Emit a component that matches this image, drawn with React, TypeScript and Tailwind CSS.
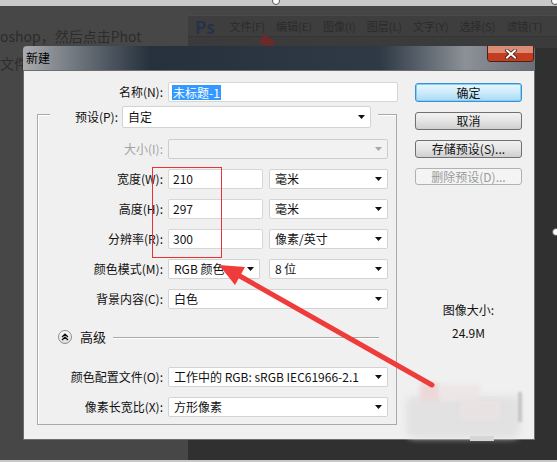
import React from "react";

function Arrow({ gray = false }: { gray?: boolean }) {
  return (
    <svg width="7" height="4" viewBox="0 0 7 4" className="shrink-0">
      <polygon points="0,0 7,0 3.5,4" fill={gray ? "#a8a8a8" : "#111"} />
    </svg>
  );
}

function Select({ w, text, disabled = false }: { w: string; text?: string; disabled?: boolean }) {
  return (
    <div
      className={`${w} h-full flex items-center justify-between rounded-[2px] border pl-[5px] pr-[5px] ${
        disabled ? "bg-[#f2f2f2] border-[#cdcdcd]" : "bg-white border-[#d3d3d3]"
      }`}
    >
      <span className="whitespace-nowrap text-[#111]">{text}</span>
      <Arrow gray={disabled} />
    </div>
  );
}

function Input({ w, text }: { w: string; text: string }) {
  return (
    <div className={`${w} h-full flex items-center rounded-[2px] border border-[#d6d6d6] bg-white pl-[4px] text-[#111]`}>
      {text}
    </div>
  );
}

function Row({ label, children, mt, disabled = false }: { label: string; children: React.ReactNode; mt: string; disabled?: boolean }) {
  return (
    <div className={`flex h-[20px] items-center ${mt}`}>
      <div className={`w-[125px] text-right whitespace-nowrap ${disabled ? "text-[#a3a3a3]" : "text-[#111]"}`}>{label}</div>
      <div className="ml-[5px] flex h-full gap-[6px]">{children}</div>
    </div>
  );
}

const btn =
  "w-[107px] flex items-center justify-center rounded-[3px] border text-[12px] whitespace-nowrap";
const btnNormal =
  "border-[#707070] text-[#111] bg-linear-to-b from-[#f2f2f2] via-[#e4e4e4] to-[#cfcfcf]";

export default function App() {
  return (
    <div className="relative w-[557px] h-[462px] overflow-hidden bg-[#474747] font-['Noto_Sans_CJK_SC','Noto_Sans',sans-serif] text-[12px]">
      <div className="h-[6px] bg-[#c9c9c9]" />
      <div className="flex h-[454px]">
        <div className="w-[188px] shrink-0 pt-[21px] text-[14px] leading-[18px] text-[#2c2c2c]">
          <div className="whitespace-nowrap">oshop，然后点击Phot</div>
          <div className="mt-[9px] whitespace-nowrap">文件</div>
        </div>
        <div className="flex min-w-0 flex-1 flex-col overflow-hidden">
          <div className="h-[9px] bg-[#464646]" />
          <div className="flex h-[21px] items-center border-t border-[#4a4a4a] bg-[#3e3e3e] pl-[7px]">
            <span className="shrink-0 text-[17px] font-bold leading-none text-[#26324a]">Ps</span>
            <div className="ml-[15px] flex shrink-0 gap-[11px] whitespace-nowrap text-[11px] text-[#2b2b2b]">
              <span>文件(F)</span>
              <span>编辑(E)</span>
              <span>图像(I)</span>
              <span>图层(L)</span>
              <span>文字(Y)</span>
              <span>选择(S)</span>
              <span>滤镜(T)</span>
            </div>
          </div>
          <div className="relative h-[12px] border-t border-[#353535] bg-[#3b3b3b]">
            <div className="absolute left-[72px] top-[0px] h-[10px] w-[14px] rotate-[35deg] bg-[#6a2a2a]" />
          </div>
          <div className="flex-1 bg-[#303030]" />
        </div>
      </div>
      <div className="h-[2px] bg-[#c8c8c8]" />

      {/* dialog */}
      <div className="absolute left-[23px] top-[46px] flex h-[394px] w-[512px] flex-col">
        <div className="relative flex h-[24px] items-center overflow-hidden rounded-t-[4px] bg-[#2a3541] bg-linear-to-r from-[#a9acaf] from-0% via-[#26313d] via-25% to-[#2f3a46] to-70% pl-[3px]">
          <div className="absolute right-0 top-0 h-full w-[155px] bg-linear-to-r from-[#2f3a46] via-[#8c9197] via-55% to-[#6a6f75]" />
          <span className="relative text-[12px] text-black">新建</span>
          <div className="absolute right-[1px] top-0 flex h-[16px] w-[47px] flex-col overflow-hidden rounded-b-[4px] border border-t-0 border-[#4a2018] bg-[#c43d21]">
            <div className="h-[7px] bg-[#dc8b74]" />
            <div className="flex-1 bg-[#c43d21]" />
            <svg className="absolute left-[17px] top-[3px]" width="12" height="10" viewBox="0 0 12 10">
              <path d="M2 1.5 L10 8.5 M10 1.5 L2 8.5" stroke="#3a1a12" strokeWidth="3.6" strokeLinecap="square" />
              <path d="M2 1.5 L10 8.5 M10 1.5 L2 8.5" stroke="#ffffff" strokeWidth="2" strokeLinecap="square" />
            </svg>
          </div>
        </div>
        <div className="flex flex-1 border border-[#6d6d6d] bg-[#f0f0f0]">
          {/* left column */}
          <div className="flex w-[376px] flex-col">
            <div className="mt-[11px] flex h-[20px] items-center">
              <div className="w-[139px] text-right text-[#111]">名称(N):</div>
              <div className="ml-[5px] flex h-full w-[230px] items-center rounded-[2px] border border-[#d6d6d6] bg-white pl-[3px]">
                <span className="bg-[#3399ff] px-[1px] leading-[15px] text-white">未标题-1</span>
              </div>
            </div>
            <div className="ml-[13px] mt-[12px] flex h-[311px] w-[360px] flex-col border border-[#a9a9a9] shadow-[inset_1px_1px_0_#ffffff]">
              <div className="-mt-[9px] ml-[12px] flex h-[22px] w-[328px] items-center bg-[#f0f0f0]">
                <div className="w-[68px] text-right text-[#111]">预设(P):</div>
                <div className="ml-[4px] h-full">
                  <Select w="w-[249px]" text="自定" />
                </div>
              </div>
              <Row label="大小(I):" mt="mt-[11px]" disabled>
                <Select w="w-[220px]" disabled />
              </Row>
              <Row label="宽度(W):" mt="mt-[10px]">
                <Input w="w-[95px]" text="210" />
                <Select w="w-[119px]" text="毫米" />
              </Row>
              <Row label="高度(H):" mt="mt-[10px]">
                <Input w="w-[95px]" text="297" />
                <Select w="w-[119px]" text="毫米" />
              </Row>
              <Row label="分辨率(R):" mt="mt-[10px]">
                <Input w="w-[95px]" text="300" />
                <Select w="w-[119px]" text="像素/英寸" />
              </Row>
              <Row label="颜色模式(M):" mt="mt-[10px]">
                <div className="h-full">
                  <Select w="w-[92px]" text="RGB 颜色" />
                </div>
                <div className="ml-[3px] h-full">
                  <Select w="w-[119px]" text="8 位" />
                </div>
              </Row>
              <Row label="背景内容(C):" mt="mt-[10px]">
                <Select w="w-[220px]" text="白色" />
              </Row>
              <div className="mt-[20px] flex h-[16px] items-center pl-[20px] pr-[17px]">
                <div className="flex h-[14px] w-[14px] items-center justify-center rounded-full border border-[#8c8c8c] bg-linear-to-b from-white to-[#dcdcdc]">
                  <svg width="8" height="8" viewBox="0 0 8 8">
                    <path d="M1 4 L4 1.2 L7 4 M1 7 L4 4.2 L7 7" fill="none" stroke="#111" strokeWidth="1.3" />
                  </svg>
                </div>
                <span className="ml-[8px] text-[13px] text-[#111]">高级</span>
                <div className="ml-[7px] h-[1px] flex-1 bg-[#a9a9a9] shadow-[0_1px_0_#ffffff]" />
              </div>
              <Row label="颜色配置文件(O):" mt="mt-[22px]">
                <Select w="w-[220px]" text="工作中的 RGB: sRGB IEC61966-2.1" />
              </Row>
              <Row label="像素长宽比(X):" mt="mt-[10px]">
                <Select w="w-[220px]" text="方形像素" />
              </Row>
            </div>
          </div>
          {/* right column */}
          <div className="ml-[15px] flex w-[107px] flex-col">
            <div
              className={`${btn} mt-[12px] h-[19px] border-[#3c8fd0] text-[#111] shadow-[inset_0_0_0_1px_#7fd0f5] bg-linear-to-b from-[#eaf6fd] via-[#cdebfc] to-[#a7d9f5]`}
            >
              确定
            </div>
            <div className={`${btn} ${btnNormal} mt-[10px] h-[18px]`}>取消</div>
            <div className={`${btn} ${btnNormal} mt-[10px] h-[18px]`}>存储预设(S)...</div>
            <div className={`${btn} mt-[10px] h-[17px] border-[#adb2b5] bg-[#f4f4f4] text-[#9a9a9a]`}>删除预设(D)...</div>
            <div className="mt-[117px] text-center leading-[16px] text-[#111]">图像大小:</div>
            <div className="mt-[7px] text-center leading-[16px] text-[#111]">24.9M</div>
          </div>
        </div>
      </div>

      {/* blurred watermark */}
      <div className="absolute left-[406px] top-[396px] h-[42px] w-[114px] rounded-[8px] bg-[#e2e2e2] blur-[3px]" />
      <div className="absolute left-[420px] top-[383px] h-[18px] w-[20px] rounded-[3px] bg-[#ecd8d8] blur-[2px]" />
      <div className="absolute left-[440px] top-[385px] h-[16px] w-[40px] bg-[#ede6e6] blur-[2px]" />
      <div className="absolute left-[460px] top-[400px] h-[20px] w-[40px] bg-[#e9e2e2] blur-[2px]" />
      <div className="absolute left-[518px] top-[392px] h-[30px] w-[4px] bg-[#c6c6c6] blur-[1px]" />
      <div className="absolute left-[470px] top-[436px] h-[5px] w-[24px] bg-[#d6d6d6]" />

      {/* red annotations */}
      <div className="absolute left-[152px] top-[167px] h-[91px] w-[70px] border border-[#ee3030]" />
      <svg className="pointer-events-none absolute left-0 top-0" width="557" height="462" viewBox="0 0 557 462">
        <line x1="238" y1="275" x2="432" y2="385" stroke="#f03b3b" strokeWidth="5" strokeLinecap="round" />
        <polygon points="219,265 245,267 235,285" fill="#f03b3b" />
      </svg>

      {/* image handles */}
      <div className="absolute left-[272px] top-[-3px] h-[8px] w-[8px] rounded-full border border-[#555] bg-white" />
      <div className="absolute left-[551px] top-[-3px] h-[8px] w-[8px] rounded-full border border-[#555] bg-white" />
      <div className="absolute left-[552px] top-[228px] h-[8px] w-[8px] rounded-full border border-[#555] bg-white" />
    </div>
  );
}
